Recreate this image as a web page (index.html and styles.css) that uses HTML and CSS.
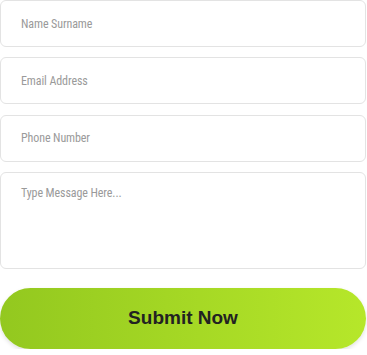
FILE: index.html
```html
<!DOCTYPE html>
<html>
<head>
<meta charset="utf-8">
<link rel="stylesheet" href="styles.css">
</head>
<body>
<form class="form">
  <input class="field" type="text" placeholder="Name Surname">
  <input class="field" type="email" placeholder="Email Address">
  <input class="field" type="tel" placeholder="Phone Number">
  <textarea class="field area" placeholder="Type Message Here..."></textarea>
  <button class="submit" type="button">Submit Now</button>
</form>
</body>
</html>
```

FILE: styles.css
```css
html, body {
  margin: 0;
  padding: 0;
  background: #ffffff;
}
.form {
  display: flex;
  flex-direction: column;
  width: 367px;
}
.field {
  box-sizing: border-box;
  width: 366px;
  height: 47px;
  margin: 0 0 10.33px 0;
  padding: 0 20px;
  border: 1px solid #e3e3e3;
  border-radius: 6px;
  background: #fff;
  font-family: Roboto, sans-serif;
  font-stretch: condensed;
  font-size: 12px;
  letter-spacing: -0.1px;
  color: #333;
  outline: none;
}
.field::placeholder {
  color: #9a9a9a;
}
.area {
  height: 97px;
  padding: 13px 20px;
  resize: none;
  margin-bottom: 19px;
}
.submit {
  width: 366px;
  height: 61px;
  border: none;
  border-radius: 31px;
  background: linear-gradient(90deg, #93c81f 0%, #b6e72a 100%);
  box-shadow: 0 2px 4px rgba(0,0,0,0.12);
  font-family: "Liberation Sans", Arial, sans-serif;
  font-weight: bold;
  font-size: 19px;
  color: #222;
  cursor: pointer;
}
```
